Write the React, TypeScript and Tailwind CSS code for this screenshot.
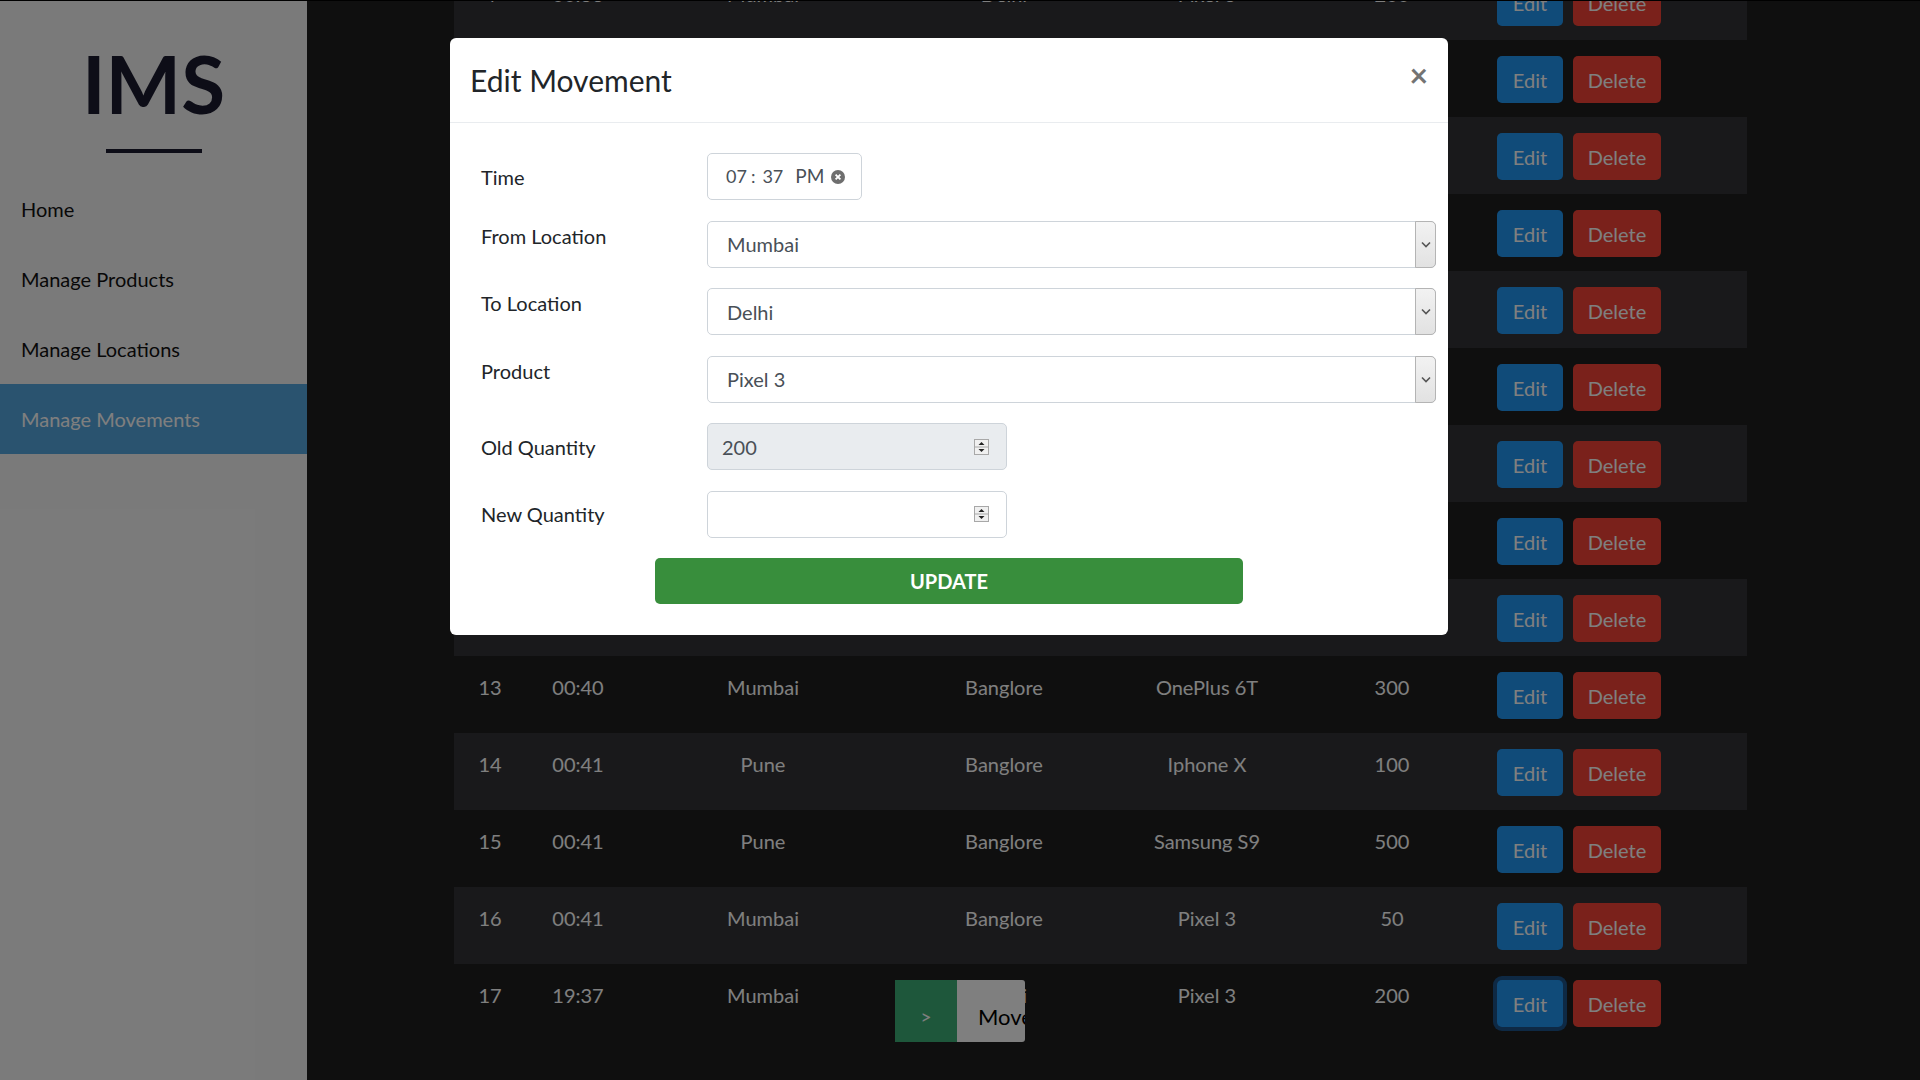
const movements = [
  { id: 4, time: '00:36', from: 'Mumbai', to: 'Delhi', product: 'Pixel 3', qty: 200 },
  { id: 5, time: '00:37', from: 'Pune', to: 'Mumbai', product: 'Iphone X', qty: 100 },
  { id: 6, time: '00:38', from: 'Banglore', to: 'Pune', product: 'Samsung S9', qty: 150 },
  { id: 7, time: '00:38', from: 'Delhi', to: 'Mumbai', product: 'OnePlus 6T', qty: 250 },
  { id: 8, time: '00:39', from: 'Mumbai', to: 'Pune', product: 'Pixel 3', qty: 75 },
  { id: 9, time: '00:39', from: 'Pune', to: 'Delhi', product: 'Iphone X', qty: 120 },
  { id: 10, time: '00:40', from: 'Banglore', to: 'Mumbai', product: 'Samsung S9', qty: 80 },
  { id: 11, time: '00:40', from: 'Delhi', to: 'Pune', product: 'OnePlus 6T', qty: 60 },
  { id: 12, time: '00:40', from: 'Mumbai', to: 'Delhi', product: 'Pixel 3', qty: 90 },
  { id: 13, time: '00:40', from: 'Mumbai', to: 'Banglore', product: 'OnePlus 6T', qty: 300 },
  { id: 14, time: '00:41', from: 'Pune', to: 'Banglore', product: 'Iphone X', qty: 100 },
  { id: 15, time: '00:41', from: 'Pune', to: 'Banglore', product: 'Samsung S9', qty: 500 },
  { id: 16, time: '00:41', from: 'Mumbai', to: 'Banglore', product: 'Pixel 3', qty: 50 },
  { id: 17, time: '19:37', from: 'Mumbai', to: 'Delhi', product: 'Pixel 3', qty: 200 },
];

const navItems = ['Home', 'Manage Products', 'Manage Locations', 'Manage Movements'];

function SelectBox({ value }: { value: string }) {
  return (
    <div className="flex h-[47px] w-[729px] items-center rounded-[5px] border border-[#ced4da] bg-white pl-[19px] text-[20px] text-[#495057]">
      <span>{value}</span>
      <div className="ml-auto flex h-[47px] w-[21px] -mr-px -my-px items-center justify-center rounded-r-[5px] border border-[#b4b4b4] bg-gradient-to-b from-[#f2f2f2] to-[#e2e2e2]">
        <svg width="10" height="7" viewBox="0 0 10 7">
          <path d="M1 1.5 5 5.5 9 1.5" fill="none" stroke="#555" strokeWidth="1.6" />
        </svg>
      </div>
    </div>
  );
}

function Spinner() {
  return (
    <svg width="15" height="16" viewBox="0 0 15 16" className="ml-auto mr-[17px]">
      <rect x="0.5" y="0.5" width="14" height="15" fill="#f0f0f0" stroke="#a8a8a8" />
      <line x1="1" y1="8" x2="14" y2="8" stroke="#a8a8a8" />
      <path d="M4.5 6 7.5 3 10.5 6Z" fill="#222" />
      <path d="M4.5 10 7.5 13 10.5 10Z" fill="#222" />
    </svg>
  );
}

export default function App() {
  return (
    <div className="relative flex h-screen w-full overflow-hidden border-t border-black font-['Lato',sans-serif]">
      {/* Sidebar */}
      <aside className="flex w-[307px] shrink-0 flex-col bg-[#f5f5f5]">
        <div className="pt-[42px] text-center text-[80px] font-bold leading-none text-[#1a1a2e]">
          IMS
        </div>
        <div className="mx-auto mt-[26px] h-[4px] w-[96px] bg-[#1a1a2e]" />
        <nav className="mt-[21px]">
          {navItems.map((item) => (
            <div
              key={item}
              className={`flex h-[70px] items-center pl-[21px] text-[20px] ${
                item === 'Manage Movements' ? 'bg-[#54a6de] text-white' : 'text-[#111]'
              }`}
            >
              {item}
            </div>
          ))}
        </nav>
      </aside>

      {/* Movements table (scrolled) */}
      <main className="flex-1 overflow-hidden bg-[#1e1e1e]">
        <div className="-mt-[38px] ml-[147px] w-[1293px]">
          {movements.map((m) => (
            <div
              key={m.id}
              className={`grid h-[77px] grid-cols-[72px_104px_266px_216px_190px_180px_1fr] text-[20px] leading-[30px] text-white ${
                m.id % 2 === 0 ? 'bg-[#323236]' : ''
              }`}
            >
              <div className="pt-[16px] text-center">{m.id}</div>
              <div className="pt-[16px] text-center">{m.time}</div>
              <div className="pt-[16px] text-center">{m.from}</div>
              <div className="pt-[16px] text-center">{m.to}</div>
              <div className="pt-[16px] text-center">{m.product}</div>
              <div className="pt-[16px] text-center">{m.qty}</div>
              <div className="flex items-start gap-[10px] pl-[15px] pt-[16px]">
                <button
                  className={`h-[47px] w-[66px] rounded-[5px] bg-[#2196f3] text-white ${
                    m.id === 17 ? 'ring-[4px] ring-[#1c5288]' : ''
                  }`}
                >
                  Edit
                </button>
                <button className="h-[47px] w-[88px] rounded-[5px] bg-[#f44336] text-white">
                  Delete
                </button>
              </div>
            </div>
          ))}
        </div>
      </main>

      {/* Feedback tab */}
      <div className="absolute left-[895px] top-[979px] flex h-[62px]">
        <div className="flex w-[62px] items-center justify-center bg-[#3dae76] pt-[12px] text-[19px] text-white">
          &gt;
        </div>
        <div className="w-[68px] overflow-hidden whitespace-nowrap rounded-r-[3px] bg-white pl-[21px] pt-[22px] text-[22px] leading-[30px] text-black">
          Movement
        </div>
      </div>

      {/* Backdrop */}
      <div className="absolute inset-0 bg-black/50" />

      {/* Modal */}
      <div className="absolute left-[450px] top-[37px] w-[998px] rounded-[6px] bg-white text-[#212529]">
        <div className="flex h-[85px] items-center justify-between border-b border-[#e9ecef] pl-[20px] pr-[20px]">
          <h4 className="text-[30px] leading-[45px]">Edit Movement</h4>
          <button className="-mt-[11px] text-[32px] font-bold leading-none text-[#737373]">×</button>
        </div>

        <div className="flex flex-col gap-[20.5px] pb-[31px] pl-[31px] pr-[12px] pt-[30px] text-[20px]">
          <div className="flex items-start">
            <label className="w-[226px] pt-[8.5px] leading-[30px]">Time</label>
            <div className="flex h-[47px] w-[155px] items-center rounded-[5px] border border-[#ced4da] pl-[18px] text-[18px] text-[#495057]">
              <span>07</span>
              <span className="ml-[4px]">:</span>
              <span className="ml-[7px]">37</span>
              <span className="ml-[12px] text-[19px]">PM</span>
              <svg width="14" height="14" viewBox="0 0 14 14" className="ml-[7px] mt-[1px]">
                <circle cx="7" cy="7" r="7" fill="#6e6e6e" />
                <path d="M4.6 4.6 9.4 9.4M9.4 4.6 4.6 9.4" stroke="#fff" strokeWidth="1.8" />
              </svg>
            </div>
          </div>

          <div className="flex items-start">
            <label className="w-[226px] leading-[30px]">From Location</label>
            <SelectBox value="Mumbai" />
          </div>

          <div className="flex items-start">
            <label className="w-[226px] leading-[30px]">To Location</label>
            <SelectBox value="Delhi" />
          </div>

          <div className="flex items-start">
            <label className="w-[226px] leading-[30px]">Product</label>
            <SelectBox value="Pixel 3" />
          </div>

          <div className="flex items-start">
            <label className="w-[226px] pt-[8.5px] leading-[30px]">Old Quantity</label>
            <div className="flex h-[47px] w-[300px] items-center rounded-[5px] border border-[#ced4da] bg-[#e9ecef] pl-[14px] text-[#495057]">
              <span>200</span>
              <Spinner />
            </div>
          </div>

          <div className="flex items-start">
            <label className="w-[226px] pt-[8.5px] leading-[30px]">New Quantity</label>
            <div className="flex h-[47px] w-[300px] items-center rounded-[5px] border border-[#ced4da] bg-white pl-[14px] text-[#495057]">
              <Spinner />
            </div>
          </div>

          <button className="ml-[174px] h-[46px] w-[588px] rounded-[5px] bg-[#388e3c] text-[20px] font-bold text-white">
            UPDATE
          </button>
        </div>
      </div>
    </div>
  );
}
